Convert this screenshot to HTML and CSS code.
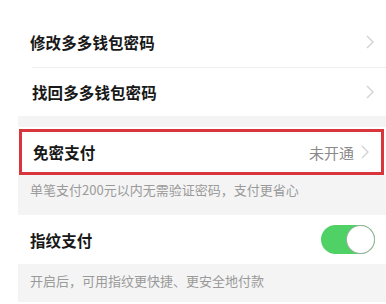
FILE: index.html
```html
<!DOCTYPE html>
<html lang="zh-CN">
<head>
<meta charset="utf-8">
<link rel="stylesheet" href="styles.css">
</head>
<body>
<div class="page">
  <div class="group">
    <div class="row">
      <span class="label">修改多多钱包密码</span>
      <svg class="chev" viewBox="0 0 8 14" width="8" height="14"><polyline points="1,1 7,7 1,13" fill="none" stroke="#d0d0d0" stroke-width="1.3"/></svg>
    </div>
    <div class="row">
      <span class="label">找回多多钱包密码</span>
      <svg class="chev" viewBox="0 0 8 14" width="8" height="14"><polyline points="1,1 7,7 1,13" fill="none" stroke="#d0d0d0" stroke-width="1.3"/></svg>
    </div>
  </div>
  <div class="gap"></div>
  <div class="row row-hl">
    <span class="label">免密支付</span>
    <span class="value">未开通</span>
    <svg class="chev chev-hl" viewBox="0 0 8 14" width="8" height="14"><polyline points="1,1 7,7 1,13" fill="none" stroke="#d0d0d0" stroke-width="1.3"/></svg>
  </div>
  <div class="note">单笔支付200元以内无需验证密码，支付更省心</div>
  <div class="row row-toggle">
    <span class="label">指纹支付</span>
    <span class="toggle"><span class="knob"></span></span>
  </div>
  <div class="note note-last">开启后，可用指纹更快捷、更安全地付款</div>
</div>
</body>
</html>
```
FILE: styles.css
```css
html, body {
  margin: 0;
  padding: 0;
  background: #ffffff;
  width: 386px;
  height: 304px;
  overflow: hidden;
  font-family: "Noto Sans CJK SC", "Noto Sans", sans-serif;
}
.page {
  margin-left: 18px;
  padding-top: 17px;
  display: flex;
  flex-direction: column;
}
.group {
  background: #ffffff;
}
.row {
  display: flex;
  align-items: center;
  height: 50px;
  padding: 0 12px;
  background: #ffffff;
  box-sizing: border-box;
}
.group .row + .row {
  border-top: 1px solid #efefef;
  margin-left: 14px;
  padding-left: 0;
  height: 49px;
}
.label {
  flex: 1;
  font-size: 15.5px;
  color: #181818;
  font-weight: 700;
  letter-spacing: 0.1px;
}
.chev {
  flex: none;
}
.gap {
  height: 11px;
  background: #f4f4f4;
}
.row-hl {
  height: 46px;
  border: 3px solid #d8353d;
  margin: 2px 2px 0 1px;
  padding: 0 11px;
}
.value {
  font-size: 15px;
  color: #8a8a8a;
  margin-right: 7px;
}
.chev-hl {
  margin-right: 1px;
}
.note {
  background: #f4f4f4;
  font-size: 13px;
  color: #9a9a9a;
  padding: 5px 12px 0;
  height: 40px;
  box-sizing: border-box;
}
.row-toggle {
  height: 49px;
}
.toggle {
  position: relative;
  width: 54px;
  height: 29px;
  border-radius: 15px;
  background: #4fd166;
  margin-right: -1px;
  flex: none;
}
.knob {
  position: absolute;
  right: 1px;
  top: 1px;
  width: 27px;
  height: 27px;
  border-radius: 50%;
  background: #ffffff;
  box-shadow: 0 0 0 1px #9bb3a0;
}
.note-last {
  height: 38px;
  padding-top: 7px;
}
```
